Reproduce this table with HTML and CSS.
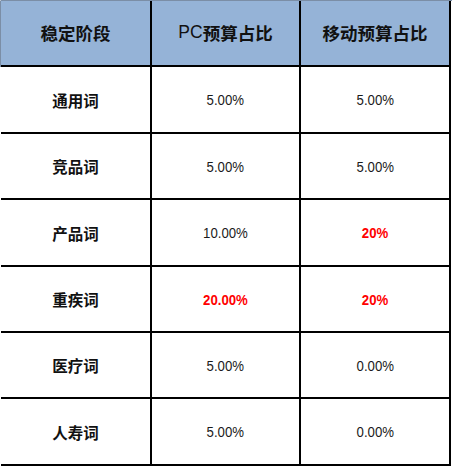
FILE: index.html
```html
<!DOCTYPE html>
<html lang="zh-CN">
<head>
<meta charset="utf-8">
<title>稳定阶段预算占比</title>
<link rel="stylesheet" href="styles.css">
</head>
<body>
<div class="sheet">
  <div class="cell head first">稳定阶段</div>
  <div class="cell head"><span class="latin">PC</span>预算占比</div>
  <div class="cell head">移动预算占比</div>

  <div class="cell label">通用词</div>
  <div class="cell num"><span class="val">5.00%</span></div>
  <div class="cell num"><span class="val">5.00%</span></div>

  <div class="cell label">竞品词</div>
  <div class="cell num"><span class="val">5.00%</span></div>
  <div class="cell num"><span class="val">5.00%</span></div>

  <div class="cell label">产品词</div>
  <div class="cell num"><span class="val">10.00%</span></div>
  <div class="cell num red"><span class="val">20%</span></div>

  <div class="cell label">重疾词</div>
  <div class="cell num red"><span class="val">20.00%</span></div>
  <div class="cell num red"><span class="val">20%</span></div>

  <div class="cell label">医疗词</div>
  <div class="cell num"><span class="val">5.00%</span></div>
  <div class="cell num"><span class="val">0.00%</span></div>

  <div class="cell label">人寿词</div>
  <div class="cell num"><span class="val">5.00%</span></div>
  <div class="cell num"><span class="val">0.00%</span></div>
</div>
</body>
</html>
```
FILE: styles.css
```css
html, body {
  margin: 0;
  padding: 0;
  background: #ffffff;
}

.sheet {
  display: grid;
  grid-template-columns: 151px 149px 150px;
  grid-template-rows: 66px 67px 66px 67px 66px 66px 67px;
  width: 451px;
  border-top: 1px solid #7b8ea6;
  border-left: 1px solid #ffffff;
  font-family: "Liberation Sans", "Noto Sans CJK SC", Arial, sans-serif;
}

.cell {
  box-sizing: border-box;
  border-right: 2px solid #000;
  border-bottom: 2px solid #000;
  display: flex;
  align-items: center;
  justify-content: center;
  color: #111;
}

.head {
  background: #95b3d7;
  font-size: 17.5px;
  font-weight: bold;
  padding-bottom: 2px;
}

.head.first {
  box-shadow: -1px 0 0 #7b8ea6;
}

.head .latin {
  font-weight: normal;
}

.label {
  font-size: 15.5px;
  font-weight: bold;
}

.num {
  font-size: 15px;
  color: #1a1a1a;
}

.num .val {
  display: inline-block;
  transform: scaleX(0.88);
}

.red {
  color: #ff0000;
  font-weight: bold;
}
```
